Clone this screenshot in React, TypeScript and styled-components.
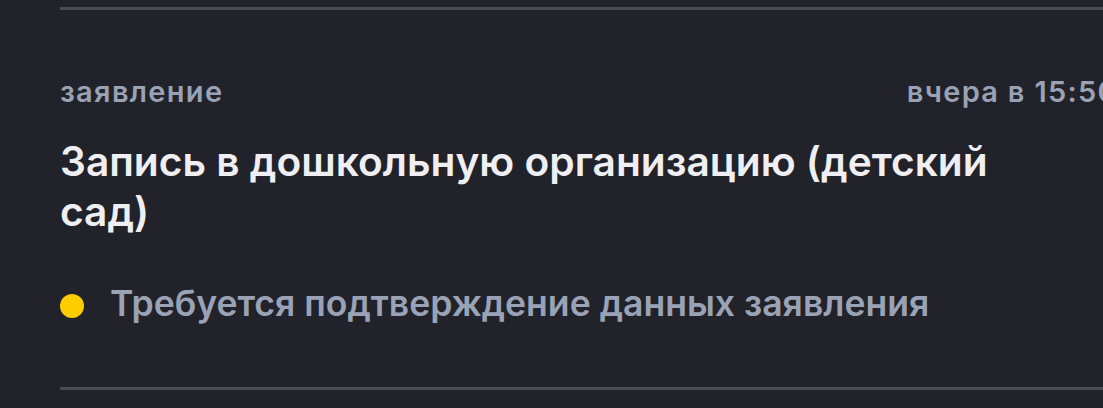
import styled, { createGlobalStyle } from "styled-components";

const GlobalStyle = createGlobalStyle`
  html, body {
    margin: 0;
    padding: 0;
    background: #21222a;
    overflow: hidden;
  }
  body {
    font-family: Inter, "Noto Sans", sans-serif;
    -webkit-font-smoothing: antialiased;
  }
`;

function App() {
  return (
    <>
      <GlobalStyle />
      <Page>
        <Card>
          <Meta>
            <Kind>заявление</Kind>
            <Time>вчера в 15:50</Time>
          </Meta>
          <Title>Запись в дошкольную организацию (детский сад)</Title>
          <Status>
            <Dot $color="#ffcc00" />
            <StatusText>Требуется подтверждение данных заявления</StatusText>
          </Status>
        </Card>
      </Page>
    </>
  );
}

export default App;

const Page = styled.div`
  padding: 7px 0 0 60px;
`;

const Card = styled.section`
  width: 1058px;
  border-top: 3px solid #4a4b54;
  border-bottom: 3px solid #4a4b54;
  padding: 64px 0 61px;
  display: flex;
  flex-direction: column;
`;

const Meta = styled.div`
  display: flex;
  justify-content: space-between;
  align-items: baseline;
`;

const Kind = styled.span`
  font-size: 29px;
  line-height: 36px;
  font-weight: 560;
  letter-spacing: 1.3px;
  color: #9aa2b6;
`;

const Time = styled(Kind)`
  white-space: nowrap;
`;

const Title = styled.h2`
  margin: 27px 0 0;
  max-width: 960px;
  font-size: 40.7px;
  line-height: 50px;
  font-weight: 560;
  color: #efeff3;
`;

const Status = styled.div`
  display: flex;
  align-items: center;
  gap: 26px;
  margin-top: 45px;
`;

const Dot = styled.span<{ $color: string }>`
  width: 24px;
  height: 24px;
  margin-top: 3px;
  border-radius: 50%;
  background: ${(p) => p.$color};
  flex: none;
`;

const StatusText = styled.span`
  font-size: 35.6px;
  line-height: 44px;
  font-weight: 560;
  color: #9aa2b6;
`;
